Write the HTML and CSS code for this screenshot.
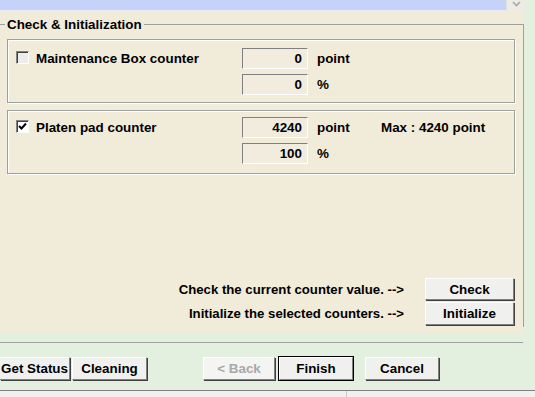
FILE: index.html
```html
<!DOCTYPE html>
<html lang="en">
<head>
    <meta charset="UTF-8">
    <title>Check &amp; Initialization</title>
    <link rel="stylesheet" href="styles.css">
</head>
<body>
    <div class="top">
        <div class="list"></div>
        <div class="scroll-btn">
            <svg width="9" height="6" viewBox="0 0 9 6"><path d="M1 1 L4.5 4.5 L8 1" fill="none" stroke="#a8a8a8" stroke-width="1.6"/></svg>
        </div>
    </div>

    <div class="panel">
        <fieldset class="group">
            <legend>Check &amp; Initialization</legend>

            <div class="counter-box">
                <div class="row">
                    <span class="check"></span>
                    <span class="name">Maintenance Box counter</span>
                    <span class="field">0</span>
                    <span class="unit">point</span>
                </div>
                <div class="row">
                    <span class="field">0</span>
                    <span class="unit">%</span>
                </div>
            </div>

            <div class="counter-box">
                <div class="row">
                    <span class="check checked">
                        <svg width="9" height="9" viewBox="0 0 9 9"><path d="M1 4 L3.5 6.5 L8 1.5" fill="none" stroke="#000" stroke-width="2"/></svg>
                    </span>
                    <span class="name">Platen pad counter</span>
                    <span class="field">4240</span>
                    <span class="unit">point</span>
                    <span class="max">Max : 4240 point</span>
                </div>
                <div class="row">
                    <span class="field">100</span>
                    <span class="unit">%</span>
                </div>
            </div>

            <div class="actions">
                <div class="action">
                    <span>Check the current counter value. --&gt;</span>
                    <button class="btn">Check</button>
                </div>
                <div class="action">
                    <span>Initialize the selected counters. --&gt;</span>
                    <button class="btn tall">Initialize</button>
                </div>
            </div>
        </fieldset>
    </div>

    <div class="footer">
        <div class="left-btns">
            <button class="btn wide first">Get Status</button>
            <button class="btn wide">Cleaning</button>
        </div>
        <div class="nav-btns">
            <button class="btn nav" disabled>&lt; Back</button>
            <button class="btn nav default">Finish</button>
            <button class="btn nav cancel">Cancel</button>
        </div>
    </div>

    <div class="status">
        <div class="status-cell"></div>
    </div>
</body>
</html>
```

FILE: styles.css
```css
body {
    margin: 0;
    width: 535px;
    height: 397px;
    overflow: hidden;
    background-color: #e3f0e0;
    font-family: "Liberation Sans", Arial, sans-serif;
    font-size: 13.4px;
    font-weight: bold;
    color: #000;
}

.top {
    display: flex;
    width: 525px;
    height: 11px;
}

.list {
    flex: 1;
    background-color: #c5d3f8;
    border-bottom: 1px solid #e8ecf8;
}

.scroll-btn {
    width: 18px;
    display: flex;
    justify-content: center;
    align-items: flex-start;
    padding-top: 1px;
    background-color: #ecebe4;
    border-left: 1px solid #e0e0e0;
}

.panel {
    width: 524px;
    height: 322px;
    background-color: #f1ecda;
    padding-top: 6px;
    box-sizing: border-box;
}

.group {
    margin: 0 0 0 -4px;
    padding: 0 8px 0 10px;
    height: 310px;
    box-sizing: border-box;
    border: 1px solid #a0a0a0;
    border-bottom: none;
    display: flex;
    flex-direction: column;
}

.group legend {
    padding: 0 2px;
    margin-left: -2px;
    line-height: 15px;
}

.counter-box {
    border: 1px solid #a0a0a0;
    box-shadow: inset 1px 1px 0 #fff, 1px 1px 0 #fff;
    padding: 8px 0 7px 8px;
    display: flex;
    flex-direction: column;
    gap: 5px;
    margin-top: 7px;
}

.counter-box + .counter-box {
    margin-top: 7px;
    padding-top: 6px;
    padding-bottom: 9px;
}

.row {
    display: flex;
    align-items: center;
    height: 21px;
    padding-left: 226px;
}

.row:first-child {
    padding-left: 0;
}

.check {
    width: 11px;
    height: 11px;
    margin-top: -2px;
    border-top: 1px solid #808080;
    border-left: 1px solid #808080;
    border-right: 1px solid #fff;
    border-bottom: 1px solid #fff;
    box-shadow: inset 1px 1px 0 #404040;
    background-color: #ececec;
    display: flex;
    align-items: center;
    justify-content: center;
}

.check.checked {
    background-color: #fff;
}

.name {
    width: 206px;
    margin-left: 7px;
}

.field {
    width: 66px;
    height: 21px;
    box-sizing: border-box;
    border-top: 1px solid #808080;
    border-left: 1px solid #808080;
    border-right: 1px solid #fff;
    border-bottom: 1px solid #fff;
    background-color: #f1ecdd;
    text-align: right;
    padding-right: 5px;
    line-height: 19px;
}

.unit {
    width: 64px;
    margin-left: 9px;
}

.actions {
    margin-top: auto;
    margin-bottom: 2px;
    display: flex;
    flex-direction: column;
    gap: 2px;
}

.action {
    display: flex;
    justify-content: flex-end;
    align-items: center;
    gap: 21px;
    font-size: 13.2px;
}

.btn {
    font-family: "Liberation Sans", Arial, sans-serif;
    font-size: 13.4px;
    font-weight: bold;
    color: #000;
    background-color: #f0f0ee;
    border-top: 1px solid #fff;
    border-left: 1px solid #fff;
    border-right: 1px solid #808080;
    border-bottom: 1px solid #808080;
    box-shadow: 1px 1px 0 #404040;
    padding: 0;
    width: 89px;
    height: 22px;
    margin-right: 1px;
}

.btn.tall {
    height: 23px;
}

.footer {
    height: 48px;
    width: 523px;
    border-top: 1px solid #a0a0a0;
    box-shadow: 0 1px 0 #fff;
    margin-top: 9px;
    box-sizing: border-box;
    padding-top: 14px;
    display: flex;
}

.left-btns {
    display: flex;
    gap: 1px;
}

.btn.wide {
    height: 23px;
    width: 75px;
}

.btn.first {
    width: 70px;
    border-left: none;
}

.nav-btns {
    display: flex;
    margin-left: 55px;
}

.btn.nav {
    width: 72px;
    height: 23px;
}

.btn.nav:disabled {
    color: #a8a8a8;
    background-color: #f4f4f2;
}

.btn.default {
    margin-left: 3px;
    width: 74px;
    outline: 1px solid #000;
    outline-offset: 0;
}

.btn.cancel {
    margin-left: 11px;
    width: 74px;
}

.status {
    height: 7px;
    background-color: #f0f0ee;
    border-top: 1px solid #808080;
    display: flex;
}

.status-cell {
    width: 346px;
    border-right: 1px solid #c8c8c8;
}
```
